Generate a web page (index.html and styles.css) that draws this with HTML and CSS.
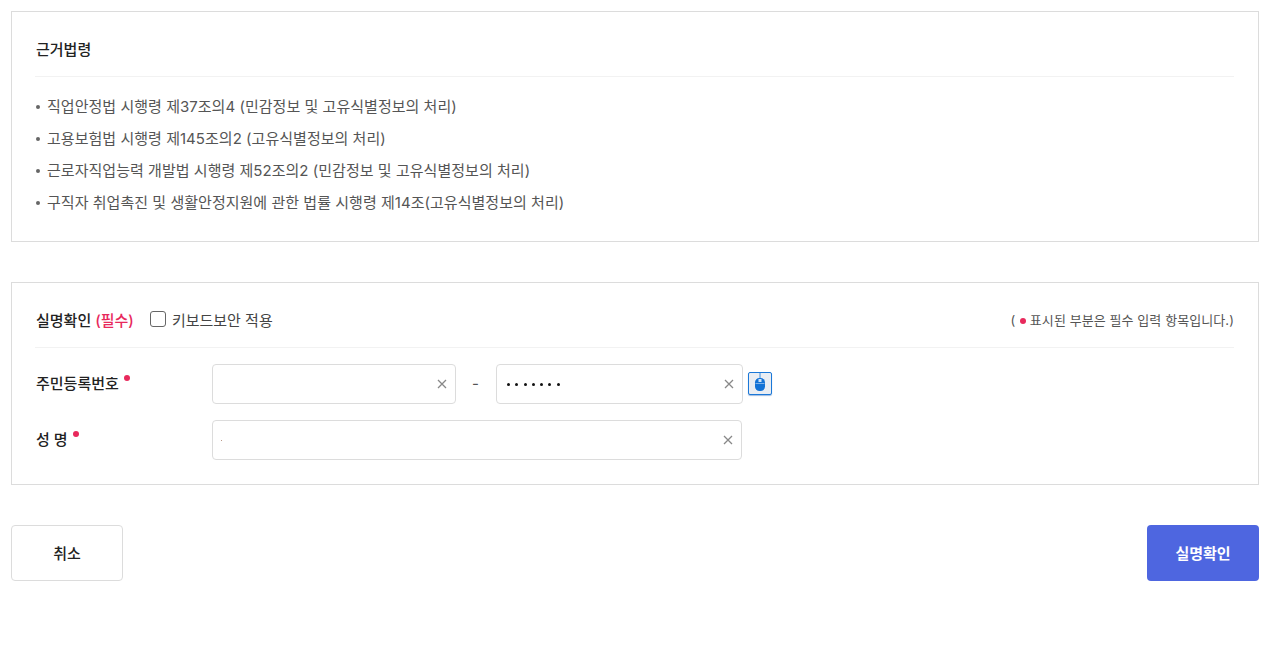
FILE: index.html
```html
<!DOCTYPE html>
<html lang="ko">
    <head>
        <title>실명확인</title>

        <link rel="stylesheet" href="styles.css">
    </head>

    <body>
        <section class="box law-box">
            <h4 class="law-title">근거법령</h4>
            <ul class="law-list">
                <li>직업안정법 시행령 제37조의4 (민감정보 및 고유식별정보의 처리)</li>
                <li>고용보험법 시행령 제145조의2 (고유식별정보의 처리)</li>
                <li>근로자직업능력 개발법 시행령 제52조의2 (민감정보 및 고유식별정보의 처리)</li>
                <li>구직자 취업촉진 및 생활안정지원에 관한 법률 시행령 제14조(고유식별정보의 처리)</li>
            </ul>
        </section>

        <section class="box form-box">
            <div class="form-head">
                <strong class="form-title">실명확인 <span class="required-text">(필수)</span></strong>
                <label class="keyboard-check">
                    <span class="check-box"></span>
                    키보드보안 적용
                </label>
                <p class="required-note">( <span class="dot dot-note"></span> 표시된 부분은 필수 입력 항목입니다.)</p>
            </div>

            <div class="form-row row-id">
                <div class="form-label">주민등록번호<span class="dot"></span></div>
                <div class="input-box input-front">
                    <span class="input-value"></span>
                    <svg class="clear-icon" viewBox="0 0 10 10"><path d="M1 1L9 9M9 1L1 9"/></svg>
                </div>
                <span class="dash">-</span>
                <div class="input-box input-back">
                    <span class="input-value secret">
                        <i></i><i></i><i></i><i></i><i></i><i></i><i></i>
                    </span>
                    <svg class="clear-icon" viewBox="0 0 10 10"><path d="M1 1L9 9M9 1L1 9"/></svg>
                </div>
                <span class="mouse-btn">
                    <svg viewBox="0 0 22 21" width="22" height="21">
                        <path class="mouse-cord" d="M11 0V5"/>
                        <rect class="mouse-body" x="6" y="5" width="10" height="13" rx="4.5"/>
                        <rect class="mouse-key" x="9.5" y="6" width="3" height="3"/>
                        <path class="mouse-line" d="M6.5 10.5H15.5"/>
                    </svg>
                </span>
            </div>

            <div class="form-row row-name">
                <div class="form-label label-name">성 명<span class="dot"></span></div>
                <div class="input-box input-name">
                    <span class="input-value"><span class="caret-dot"></span></span>
                    <svg class="clear-icon" viewBox="0 0 10 10"><path d="M1 1L9 9M9 1L1 9"/></svg>
                </div>
            </div>
        </section>

        <div class="btn-row">
            <button class="btn btn-cancel">취소</button>
            <button class="btn btn-confirm">실명확인</button>
        </div>
    </body>
</html>
```

FILE: styles.css
```css
* {
    box-sizing: border-box;
}

body {
    margin: 0;
    padding: 11px 29px 0 11px;
    height: 656px;
    overflow: hidden;

    font-family: Inter, "Noto Sans CJK KR", sans-serif;
    font-size: 15px;
    color: #222;
    background-color: white;
}

.box {
    border: 1px solid #dcdcdc;
    padding: 0 24px 0 23px;
}

.law-box {
    height: 231px;
}

.law-title {
    margin: 0;
    height: 65px;
    padding: 26px 0 0 1px;

    font-size: 15px;
    line-height: 24px;
    font-weight: 500;
    color: #222;
    border-bottom: 1px solid #f2f2f2;
}

.law-list {
    list-style: none;
    margin: 0;
    padding: 14px 0 0;
}

.law-list li {
    position: relative;
    height: 32px;
    padding-left: 12px;

    line-height: 32px;
    letter-spacing: 0.03px;
    color: #555;
}

.law-list li::before {
    content: "";
    position: absolute;
    left: 1px;
    top: 14px;
    width: 4px;
    height: 4px;

    border-radius: 50%;
    background-color: #666;
}

.form-box {
    height: 203px;
    margin-top: 40px;
}

.form-head {
    display: flex;
    align-items: center;
    height: 65px;
    padding: 8px 0 0 1px;
    border-bottom: 1px solid #f2f2f2;
}

.form-title {
    font-size: 15px;
    font-weight: 500;
}

.required-text {
    color: #e8295c;
}

.keyboard-check {
    display: flex;
    align-items: center;
    gap: 6px;
    margin-left: 16px;
    color: #444;
}

.check-box {
    width: 16px;
    height: 16px;

    border: 1px solid #666;
    border-radius: 3px;
}

.required-note {
    margin: 0 0 0 auto;
    font-size: 13px;
    letter-spacing: 0.08px;
    color: #555;
}

.dot {
    display: inline-block;
    width: 6px;
    height: 6px;
    margin-left: 5px;
    vertical-align: 8px;

    border-radius: 50%;
    background-color: #e8295c;
}

.dot-note {
    margin-left: 1px;
    vertical-align: 1px;
}

.form-row {
    display: flex;
    align-items: center;
}

.row-id {
    margin-top: 16px;
}

.row-name {
    margin-top: 16px;
}

.form-label {
    width: 177px;
    padding: 0 0 3px 1px;
    font-weight: 500;
    color: #222;
}

.input-box {
    display: flex;
    align-items: center;
    height: 40px;
    padding: 0 8px 0 9px;

    border: 1px solid #dcdcdc;
    border-radius: 4px;
}

.input-front {
    width: 244px;
}

.input-back {
    width: 247px;
}

.input-name {
    width: 530px;
}

.input-value {
    flex: 1;
    display: flex;
    gap: 5.3px;
    align-items: center;
}

.secret {
    padding-left: 1px;
}

.secret i {
    width: 3px;
    height: 3px;
    border-radius: 50%;
    background-color: #111;
}

.caret-dot {
    width: 1px;
    height: 1px;
    margin-left: -1px;
    background-color: #b98;
}

.clear-icon {
    width: 10px;
    height: 10px;
    fill: none;
    stroke: #888;
    stroke-width: 1.3;
}

.dash {
    width: 40px;
    padding: 0 1px 2px 0;
    text-align: center;
    color: #555;
}

.mouse-btn {
    display: flex;
    width: 24px;
    height: 23px;
    margin: 0 0 1px 5px;
    overflow: hidden;

    border: 1px solid #1b78d8;
    border-radius: 2px;
    background-color: #e9edf3;
    box-shadow: 0 1px 1px #9dbbe0;
}

.mouse-cord {
    stroke: #3b8ee0;
    stroke-width: 1;
}

.mouse-body {
    fill: #1272d6;
}

.mouse-key {
    fill: #cfe3f8;
}

.mouse-line {
    stroke: #7db2ea;
    stroke-width: 1;
}

.btn-row {
    display: flex;
    justify-content: space-between;
    margin-top: 40px;
}

.btn {
    width: 112px;
    height: 56px;
    padding: 0 0 2px;

    font-family: inherit;
    font-size: 15px;
    font-weight: 500;
    border-radius: 4px;
}

.btn-cancel {
    color: #222;
    background-color: white;
    border: 1px solid #dcdcdc;
}

.btn-confirm {
    font-weight: 700;
    color: white;
    background-color: #4e66e0;
    border: none;
}
```
